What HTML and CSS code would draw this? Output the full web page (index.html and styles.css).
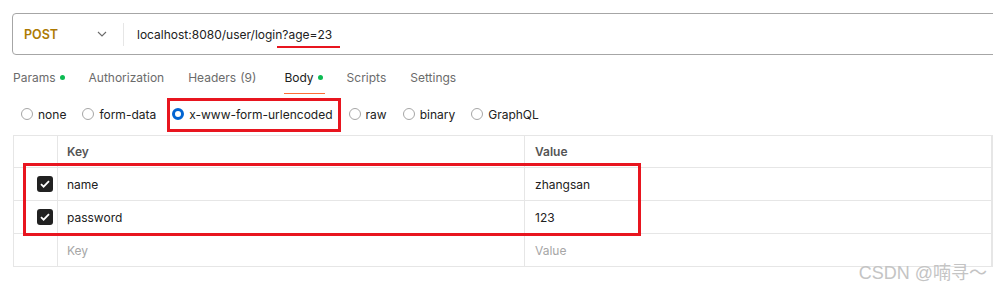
FILE: index.html
```html
<!DOCTYPE html>
<html lang="en">
<head>
    <meta charset="UTF-8">
    <title>POST localhost:8080/user/login</title>
    <link rel="stylesheet" href="styles.css">
</head>
<body>
    <div class="page">
        <div class="url-bar">
            <div class="method">POST</div>
            <svg class="chevron" width="10" height="6" viewBox="0 0 10 6"><path d="M1 1l4 4 4-4" fill="none" stroke="#6b6b6b" stroke-width="1.1"/></svg>
            <div class="divider"></div>
            <div class="url">localhost:8080/user/login<span class="mark-under">?age=23</span></div>
        </div>

        <div class="tabs">
            <div class="tab">Params<span class="dot"></span></div>
            <div class="tab">Authorization</div>
            <div class="tab tab-wide">Headers <span class="count">(9)</span></div>
            <div class="tab active">Body<span class="dot"></span></div>
            <div class="tab">Scripts</div>
            <div class="tab">Settings</div>
        </div>

        <div class="body-types">
            <label class="radio"><span class="circle"></span>none</label>
            <label class="radio"><span class="circle"></span>form-data</label>
            <label class="radio checked"><span class="circle"></span>x-www-form-urlencoded</label>
            <label class="radio"><span class="circle"></span>raw</label>
            <label class="radio"><span class="circle"></span>binary</label>
            <label class="radio"><span class="circle"></span>GraphQL</label>
        </div>

        <div class="kv-table">
            <div class="row head">
                <div class="cell check"></div>
                <div class="cell key">Key</div>
                <div class="cell value">Value</div>
            </div>
            <div class="row">
                <div class="cell check"><span class="box"><svg width="10" height="8" viewBox="0 0 10 8"><path d="M1 4.2l2.6 2.5L9 1.2" fill="none" stroke="#fff" stroke-width="1.8"/></svg></span></div>
                <div class="cell key">name</div>
                <div class="cell value">zhangsan</div>
            </div>
            <div class="row">
                <div class="cell check"><span class="box"><svg width="10" height="8" viewBox="0 0 10 8"><path d="M1 4.2l2.6 2.5L9 1.2" fill="none" stroke="#fff" stroke-width="1.8"/></svg></span></div>
                <div class="cell key">password</div>
                <div class="cell value">123</div>
            </div>
            <div class="row empty">
                <div class="cell check"></div>
                <div class="cell key">Key</div>
                <div class="cell value">Value</div>
            </div>
        </div>

        <!-- red annotation boxes -->
        <div class="mark mark-radio"></div>
        <div class="mark mark-rows"></div>

        <div class="watermark">CSDN @喃寻～</div>
    </div>
</body>
</html>
```

FILE: styles.css
```css
html, body {
    margin: 0;
    background: #fff;
    font-family: Inter, "Noto Sans CJK SC", sans-serif;
    font-size: 12px;
    color: #212121;
    overflow: hidden;
}

.page {
    position: relative;
    height: 291px;
    padding-top: 13px;
    box-sizing: border-box;
}

.url-bar {
    display: flex;
    align-items: center;
    height: 42px;
    box-sizing: border-box;
    margin-left: 12px;
    margin-right: -20px;
    border: 1px solid #a6a6a6;
    border-radius: 4px;
}

.method {
    color: #ad7a03;
    font-weight: 600;
    font-size: 12.5px;
    padding-left: 11px;
    width: 73px;
}

.chevron {
    margin-right: 16px;
}

.divider {
    width: 1px;
    height: 23px;
    background: #e6e6e6;
}

.url {
    padding-left: 13px;
    color: #212121;
}

.mark-under {
    padding-bottom: 4px;
    border-bottom: 2px solid #e8151f;
    margin-left: -5px;
    padding-left: 5px;
    padding-right: 8px;
}

.tabs {
    display: flex;
    align-items: center;
    height: 44px;
    padding-left: 13px;
}

.tab {
    position: relative;
    display: flex;
    align-items: center;
    color: #6b6b6b;
    margin-right: 24px;
    height: 100%;
}

.tab-wide {
    margin-right: 28px;
}

.tab.active {
    color: #212121;
}

.tab.active::after {
    content: "";
    position: absolute;
    left: 0;
    right: -2px;
    bottom: 5px;
    height: 1px;
    background: #ff6c37;
}

.count {
    color: #6b6b6b;
    margin-left: 4px;
}

.dot {
    width: 5px;
    height: 5px;
    border-radius: 50%;
    background: #0cbb52;
    margin-left: 4px;
}

.body-types {
    display: flex;
    align-items: center;
    height: 30px;
    padding-left: 21px;
}

.radio {
    display: flex;
    align-items: center;
    color: #212121;
    margin-right: 16px;
}

.circle {
    width: 10px;
    height: 10px;
    border: 1px solid #a6a6a6;
    border-radius: 50%;
    margin-right: 5px;
}

.radio.checked .circle {
    width: 6px;
    height: 6px;
    border: 3px solid #0265d2;
}

.kv-table {
    margin: 6px 0 0 13px;
    border: 1px solid #e6e6e6;
    border-right-width: 2px;
}

.row {
    display: grid;
    grid-template-columns: 44px 467px 1fr;
    height: 33px;
    box-sizing: border-box;
    border-top: 1px solid #e6e6e6;
}

.row.head {
    border-top: none;
    height: 31px;
}

.cell {
    display: flex;
    align-items: center;
    padding-left: 9px;
    border-right: 1px solid #e6e6e6;
}

.cell.value {
    border-right: none;
    padding-left: 10px;
}

.cell.check {
    padding-left: 23px;
}

.head .cell {
    color: #555;
    font-weight: 600;
}

.empty .cell {
    color: #a6a6a6;
}

.box {
    display: flex;
    align-items: center;
    justify-content: center;
    width: 16px;
    height: 16px;
    background: #212121;
    border-radius: 3px;
}

.mark {
    position: absolute;
    border: 3px solid #e8151f;
    box-sizing: border-box;
}

.mark-radio {
    left: 167px;
    top: 98px;
    width: 174px;
    height: 34px;
}

.mark-rows {
    left: 23px;
    top: 163px;
    width: 618px;
    height: 73px;
}

.watermark {
    position: absolute;
    right: 6px;
    bottom: 7px;
    font-family: "Liberation Sans", "Noto Sans CJK SC", sans-serif;
    font-size: 18px;
    color: #c4c4c4;
}
```
